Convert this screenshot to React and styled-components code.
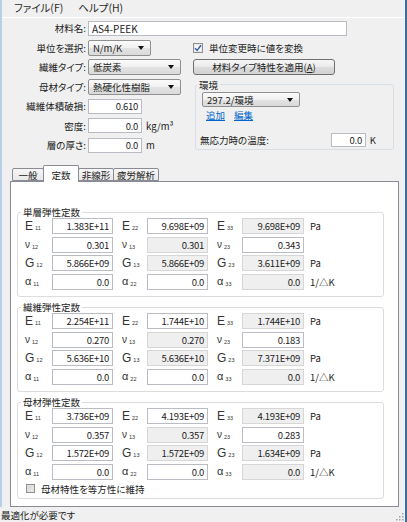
import React from "react";
import styled, { createGlobalStyle } from "styled-components";

const GlobalStyle = createGlobalStyle`
  html, body { margin: 0; padding: 0; background: #f0f0f0; }
  body {
    font-family: "Noto Sans CJK JP", "Noto Sans", sans-serif;
    font-size: 9.5px;
    color: #222222;
  }
  * { box-sizing: border-box; }
`;

const Window = styled.div`
  width: 407px;
  height: 522px;
  display: flex;
  flex-direction: column;
  background: #f0f0f0;
  border-right: 2px solid #3b6d99;
  overflow: hidden;
  font-feature-settings: "palt";
`;

const Main = styled.div`
  flex: 1;
  display: flex;
  flex-direction: column;
  border-left: 2px solid #b6d0ea;
  min-height: 0;
`;

const MenuBar = styled.div`
  height: 18px;
  display: flex;
  align-items: center;
  gap: 15px;
  padding-left: 12px;
  border-bottom: 1px solid #ffffff;
  font-size: 10.5px;
  color: #2a2a2a;
`;

const MenuItem = styled.span`
  line-height: 1;
`;

const Form = styled.div`
  display: grid;
  grid-template-columns: 84px 103px 202px;
  grid-auto-rows: 16px;
  column-gap: 2px;
  row-gap: 3.5px;
  padding-top: 2px;
`;

const Label = styled.div`
  display: flex;
  align-items: center;
  justify-content: flex-end;
  font-size: 9.5px;
  white-space: nowrap;
`;

const TextBox = styled.div`
  justify-self: start;
  align-self: center;
  width: ${(p) => p.$w}px;
  height: ${(p) => p.$h || 15}px;
  background: ${(p) => (p.$ro ? "#efefef" : "#ffffff")};
  border: 1px solid ${(p) => (p.$ro ? "#d6d6d6" : "#b9bdc3")};
  display: flex;
  align-items: center;
  justify-content: ${(p) => (p.$left ? "flex-start" : "flex-end")};
  padding: 0 3px;
  font-size: ${(p) => (p.$left ? "10px" : "9.5px")};
  letter-spacing: ${(p) => (p.$left ? "0" : "-0.3px")};
  white-space: nowrap;
  ${(p) => p.$span && "grid-column: 2 / 4;"}
`;

const Combo = styled.div`
  justify-self: start;
  width: ${(p) => p.$w}px;
  height: ${(p) => p.$h || 16}px;
  border: 1px solid #8f9092;
  border-radius: 2px;
  background: linear-gradient(#fbfbfb, #f0f0f0 50%, #e3e3e3 51%, #dadada);
  display: flex;
  align-items: center;
  padding: 0 6px 0 4px;
  font-size: 9.5px;
  white-space: nowrap;
`;

const ComboText = styled.span`
  flex: 1;
`;

const Arrow = styled.span`
  width: 0;
  height: 0;
  border-left: 3.5px solid transparent;
  border-right: 3.5px solid transparent;
  border-top: 4px solid #111;
`;

const Field = styled.div`
  display: flex;
  align-items: center;
  gap: 4px;
`;

const Unit = styled.span`
  font-size: 9.5px;
  white-space: nowrap;
`;

const CheckRow = styled.label`
  display: flex;
  align-items: center;
  gap: 6px;
  font-size: 9.5px;
  white-space: nowrap;
`;

const CheckBox = styled.span`
  width: ${(p) => p.$s || 10}px;
  height: ${(p) => p.$s || 10}px;
  border: 1px solid #8e8f8f;
  background: ${(p) =>
    p.$on ? "linear-gradient(#f4f4f4, #ffffff)" : "linear-gradient(135deg, #cfcfcf, #f0f0f0)"};
  box-shadow: inset 0 0 0 1px ${(p) => (p.$on ? "#e8e8e8" : "#e4e4e4")};
  display: flex;
  align-items: center;
  justify-content: center;
`;

const Button = styled.div`
  justify-self: start;
  width: 142px;
  height: 16px;
  border: 1px solid #707070;
  border-radius: 3px;
  background: linear-gradient(#f6f6f6, #eaeaea 50%, #dddddd 51%, #d2d2d2);
  display: flex;
  align-items: center;
  justify-content: center;
  font-size: 9.5px;
`;

const EnvGroup = styled.fieldset`
  grid-row: span 4;
  margin: 0 1px 3px 2px;
  padding: 0 17px 2px 6px;
  border: 1px solid #d5dfe5;
  border-radius: 3px;
  min-width: 0;
`;

const Legend = styled.legend`
  padding: 0 2px;
  margin-left: ${(p) => p.$ml || 0}px;
  line-height: 12px;
  font-size: 9.5px;
`;

const EnvCombo = styled(Combo)`
  margin-top: 1.5px;
`;

const LinkRow = styled.div`
  height: 12px;
  margin-top: 3px;
  padding-left: 4px;
  display: flex;
  align-items: center;
  gap: 9px;
`;

const Link = styled.a`
  color: #0066cc;
  text-decoration: underline;
  font-size: 9.5px;
  line-height: 1;
`;

const TempRow = styled.div`
  height: 14px;
  margin-top: 10.5px;
  margin-left: -2px;
  display: flex;
  align-items: center;
  gap: 4px;
  font-size: 9.5px;
`;

const TempLabel = styled.span`
  flex: 1;
  white-space: nowrap;
`;

const Tabs = styled.div`
  flex: 1;
  margin: 12px 0 0 8px;
  width: 389px;
  display: flex;
  flex-direction: column;
  min-height: 0;
`;

const TabStrip = styled.div`
  height: 17px;
  display: flex;
  align-items: flex-end;
  padding-left: 3px;
  margin-bottom: -1px;
  position: relative;
  z-index: 1;
`;

const Tab = styled.div`
  width: ${(p) => p.$w}px;
  height: ${(p) => (p.$active ? 17 : 13)}px;
  margin-left: -1px;
  margin-bottom: ${(p) => (p.$active ? 0 : 1)}px;
  border: 1px solid #898c95;
  border-bottom: ${(p) => (p.$active ? "none" : "1px solid #898c95")};
  border-radius: 2px 2px 0 0;
  background: ${(p) => (p.$active ? "#ffffff" : "linear-gradient(#f6f6f6, #e8e8e8)")};
  display: flex;
  align-items: ${(p) => (p.$active ? "flex-start" : "center")};
  padding-top: ${(p) => (p.$active ? 2 : 0)}px;
  justify-content: center;
  font-size: 9.5px;
  position: relative;
  z-index: ${(p) => (p.$active ? 2 : 1)};
`;

const Panel = styled.div`
  flex: 1;
  background: #ffffff;
  border: 1px solid #898c95;
  padding: 24px 14px 0 6px;
  display: flex;
  flex-direction: column;
`;

const Group = styled.fieldset`
  margin: 0 0 4px;
  padding: 0 0 ${(p) => p.$pb}px 7px;
  border: 1px solid #dcdcdc;
  border-radius: 3px;
  min-width: 0;
`;

const ConstGrid = styled.div`
  display: grid;
  grid-template-columns: 27px 61px 34px 61px 34px 62px auto;
  grid-auto-rows: 16px;
  row-gap: 2.5px;
`;

const Sym = styled.div`
  display: flex;
  align-items: center;
  padding-left: ${(p) => (p.$first ? 0 : 9)}px;
  font-family: "Liberation Sans", "Noto Sans", sans-serif;
  font-size: ${(p) => p.$fs}px;
  line-height: 1;
  white-space: nowrap;
  color: #333;
`;

const Sub = styled.span`
  font-size: 5.5px;
  margin-left: 2px;
  position: relative;
  top: 3px;
`;

const ValueBox = styled(TextBox)`
  height: 16px;
  width: 100%;
`;

const UnitCell = styled.div`
  display: flex;
  align-items: center;
  padding-left: 6px;
  font-size: 9.5px;
  white-space: nowrap;
`;

const IsoRow = styled(CheckRow)`
  height: 14px;
  margin-top: 2px;
  margin-left: 1px;
`;

const StatusBar = styled.div`
  height: 15px;
  flex-shrink: 0;
  display: flex;
  align-items: center;
  padding-left: 1px;
  font-size: 9.5px;
  position: relative;
`;

const Grip = styled.svg`
  position: absolute;
  right: 1px;
  bottom: 1px;
`;

const symSize = { E: 12, G: 12, "ν": 10, "α": 11 };

const groups = [
  {
    title: "単層弾性定数",
    pb: 6.5,
    rows: [
      ["E", ["11", "1.383E+11"], ["22", "9.698E+09"], ["33", "9.698E+09"], "Pa"],
      ["ν", ["12", "0.301"], ["13", "0.301"], ["23", "0.343"], ""],
      ["G", ["12", "5.866E+09"], ["13", "5.866E+09"], ["23", "3.611E+09"], "Pa"],
      ["α", ["11", "0.0"], ["22", "0.0"], ["33", "0.0"], "1/△K"],
    ],
  },
  {
    title: "繊維弾性定数",
    pb: 6.5,
    rows: [
      ["E", ["11", "2.254E+11"], ["22", "1.744E+10"], ["33", "1.744E+10"], "Pa"],
      ["ν", ["12", "0.270"], ["13", "0.270"], ["23", "0.183"], ""],
      ["G", ["12", "5.636E+10"], ["13", "5.636E+10"], ["23", "7.371E+09"], "Pa"],
      ["α", ["11", "0.0"], ["22", "0.0"], ["33", "0.0"], "1/△K"],
    ],
  },
  {
    title: "母材弾性定数",
    pb: 2,
    iso: true,
    rows: [
      ["E", ["11", "3.736E+09"], ["22", "4.193E+09"], ["33", "4.193E+09"], "Pa"],
      ["ν", ["12", "0.357"], ["13", "0.357"], ["23", "0.283"], ""],
      ["G", ["12", "1.572E+09"], ["13", "1.572E+09"], ["23", "1.634E+09"], "Pa"],
      ["α", ["11", "0.0"], ["22", "0.0"], ["33", "0.0"], "1/△K"],
    ],
  },
];

// read-only pattern per symbol, by column
const readOnly = {
  E: [false, false, true],
  "ν": [false, true, false],
  G: [false, true, true],
  "α": [false, false, true],
};

function CheckMark() {
  return (
    <svg width="8" height="8" viewBox="0 0 8 8">
      <path d="M1 4.2 L3.1 6.4 L7 1.2" fill="none" stroke="#3a5fb0" strokeWidth="1.5" />
    </svg>
  );
}

function ConstGroup({ g }) {
  return (
    <Group $pb={g.pb}>
      <Legend $ml={-4}>{g.title}</Legend>
      <ConstGrid>
        {g.rows.map((r) => {
          const [sym, a, b, c, unit] = r;
          return [a, b, c]
            .map((cell, i) => (
              <React.Fragment key={sym + i}>
                <Sym $first={i === 0} $fs={symSize[sym]}>
                  {sym}
                  <Sub>{cell[0]}</Sub>
                </Sym>
                <ValueBox $ro={readOnly[sym][i]}>{cell[1]}</ValueBox>
              </React.Fragment>
            ))
            .concat(<UnitCell key={sym + "u"}>{unit}</UnitCell>);
        })}
      </ConstGrid>
      {g.iso && (
        <IsoRow>
          <CheckBox $s={9} />
          母材特性を等方性に維持
        </IsoRow>
      )}
    </Group>
  );
}

export default function App() {
  return (
    <>
      <GlobalStyle />
      <Window>
        <Main>
          <MenuBar>
            <MenuItem>ファイル(F)</MenuItem>
            <MenuItem>ヘルプ(H)</MenuItem>
          </MenuBar>
          <Form>
            <Label>材料名:</Label>
            <TextBox $w={259} $left $span>AS4-PEEK</TextBox>

            <Label>単位を選択:</Label>
            <Combo $w={63}>
              <ComboText>N/m/K</ComboText>
              <Arrow />
            </Combo>
            <CheckRow>
              <CheckBox $on>
                <CheckMark />
              </CheckBox>
              単位変更時に値を変換
            </CheckRow>

            <Label>繊維タイプ:</Label>
            <Combo $w={93}>
              <ComboText>低炭素</ComboText>
              <Arrow />
            </Combo>
            <Button>材料タイプ特性を適用(<u>A</u>)</Button>

            <Label>母材タイプ:</Label>
            <Combo $w={93}>
              <ComboText>熱硬化性樹脂</ComboText>
              <Arrow />
            </Combo>
            <EnvGroup>
              <Legend $ml={-5}>環境</Legend>
              <EnvCombo $w={98} $h={15}>
                <ComboText>297.2/環境</ComboText>
                <Arrow />
              </EnvCombo>
              <LinkRow>
                <Link>追加</Link>
                <Link>編集</Link>
              </LinkRow>
              <TempRow>
                <TempLabel>無応力時の温度:</TempLabel>
                <TextBox $w={35} $h={14}>0.0</TextBox>
                <Unit>K</Unit>
              </TempRow>
            </EnvGroup>

            <Label>繊維体積破損:</Label>
            <Field>
              <TextBox $w={54}>0.610</TextBox>
            </Field>

            <Label>密度:</Label>
            <Field>
              <TextBox $w={54}>0.0</TextBox>
              <Unit>kg/m³</Unit>
            </Field>

            <Label>層の厚さ:</Label>
            <Field>
              <TextBox $w={54}>0.0</TextBox>
              <Unit>m</Unit>
            </Field>
          </Form>

          <Tabs>
            <TabStrip>
              <Tab $w={32}>一般</Tab>
              <Tab $w={36} $active>定数</Tab>
              <Tab $w={36}>非線形</Tab>
              <Tab $w={46}>疲労解析</Tab>
            </TabStrip>
            <Panel>
              {groups.map((g) => (
                <ConstGroup key={g.title} g={g} />
              ))}
            </Panel>
          </Tabs>
        </Main>
        <StatusBar>
          最適化が必要です
          <Grip width="10" height="10" viewBox="0 0 10 10">
            {[
              [8, 2], [8, 5], [5, 5], [8, 8], [5, 8], [2, 8],
            ].map(([x, y]) => (
              <rect key={x + "-" + y} x={x} y={y} width="1.5" height="1.5" fill="#a0a0a0" />
            ))}
          </Grip>
        </StatusBar>
      </Window>
    </>
  );
}
